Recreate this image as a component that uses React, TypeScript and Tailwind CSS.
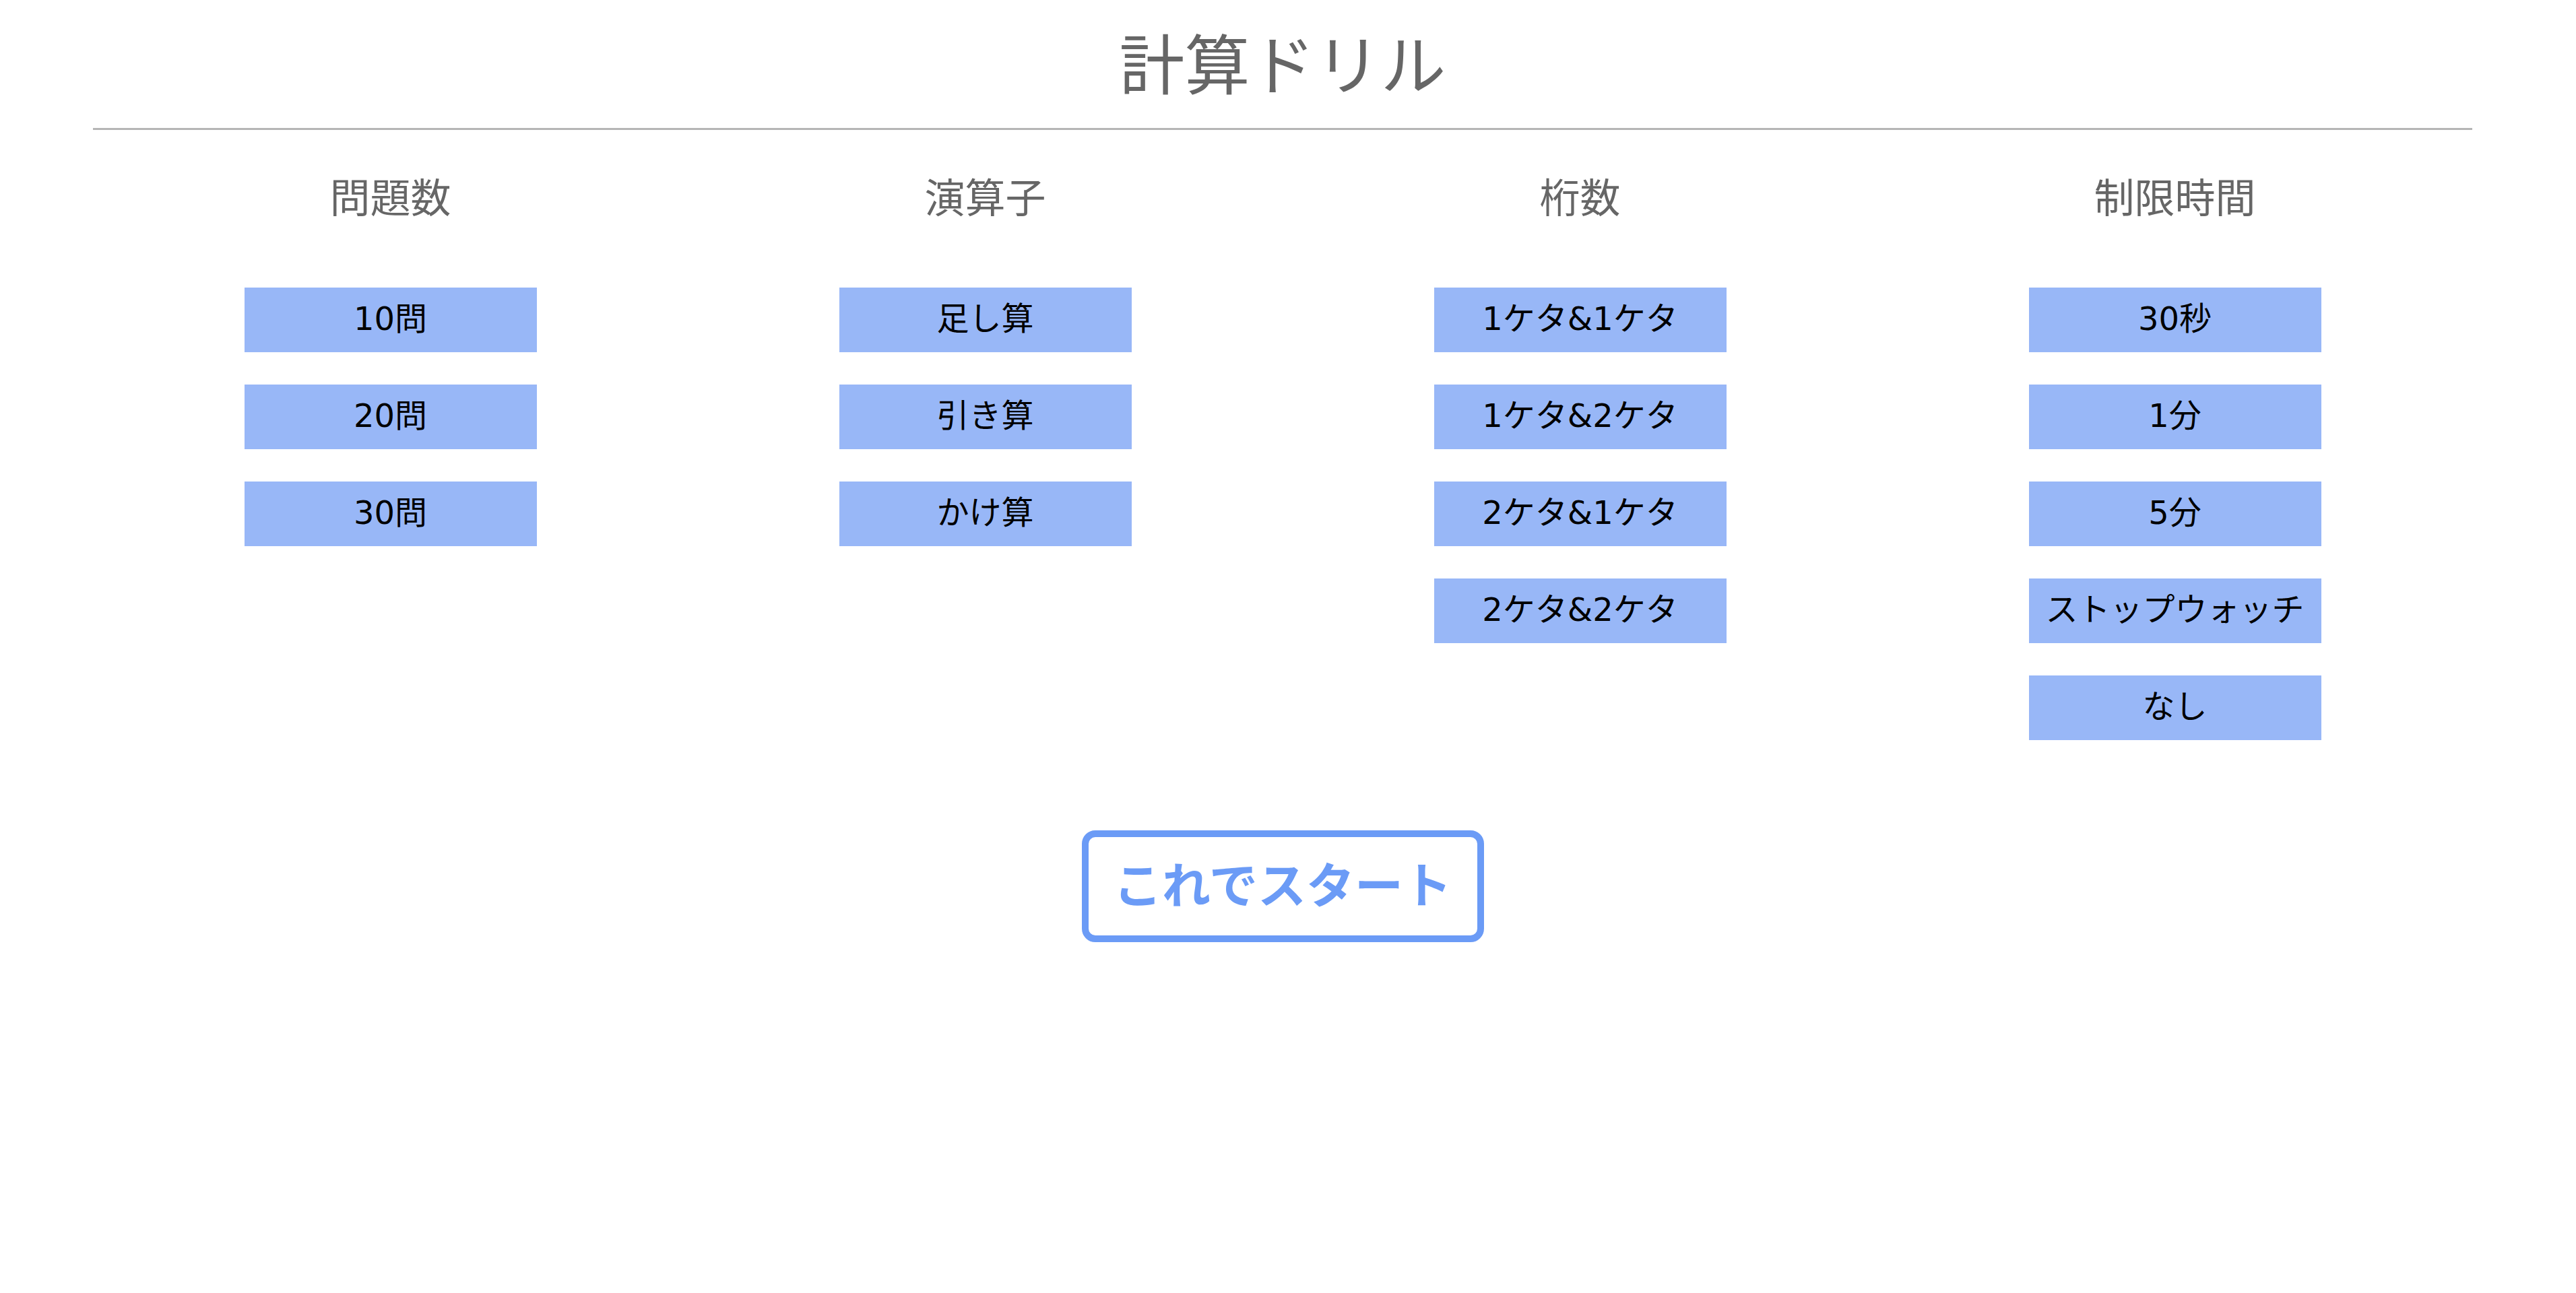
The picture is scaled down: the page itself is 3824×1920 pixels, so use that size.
const columns = [
  { title: "問題数", options: ["10問", "20問", "30問"] },
  { title: "演算子", options: ["足し算", "引き算", "かけ算"] },
  { title: "桁数", options: ["1ケタ&1ケタ", "1ケタ&2ケタ", "2ケタ&1ケタ", "2ケタ&2ケタ"] },
  { title: "制限時間", options: ["30秒", "1分", "5分", "ストップウォッチ", "なし"] },
];

const App = () => {
  return (
    <div
      className="min-h-[1920px] w-full bg-white"
      style={{ fontFamily: '"DejaVu Sans", "Noto Sans CJK JP", sans-serif' }}
    >
      <div className="ml-[138px] w-[3532px]">
        <h1 className="pt-[50px] h-[149px] text-center text-[97px] leading-none text-[#666666]">
          計算ドリル
        </h1>
        <hr className="mt-[41px] border-0 h-[3px] bg-[#b5b5b5]" />

        <div className="grid grid-cols-4 mt-[72px]">
          {columns.map((col) => (
            <div key={col.title} className="flex flex-col items-center">
              <h2 className="h-[60px] text-[60px] leading-none text-[#666666]">{col.title}</h2>
              <div className="mt-[102px] flex flex-col gap-[48px]">
                {col.options.map((opt) => (
                  <button
                    key={opt}
                    className="w-[434px] h-[96px] pb-[4px] bg-[#98b7f7] text-black text-[48px] leading-none flex items-center justify-center cursor-pointer"
                  >
                    {opt}
                  </button>
                ))}
              </div>
            </div>
          ))}
        </div>

        <div className="flex justify-center mt-[134px]">
          <button className="w-[597px] h-[166px] border-[10px] border-[#6b9bf6] rounded-[20px] bg-white text-[#6b9bf6] text-[72px] font-bold leading-none flex items-center justify-center cursor-pointer">
            これでスタート
          </button>
        </div>
      </div>
    </div>
  );
};

export default App;
